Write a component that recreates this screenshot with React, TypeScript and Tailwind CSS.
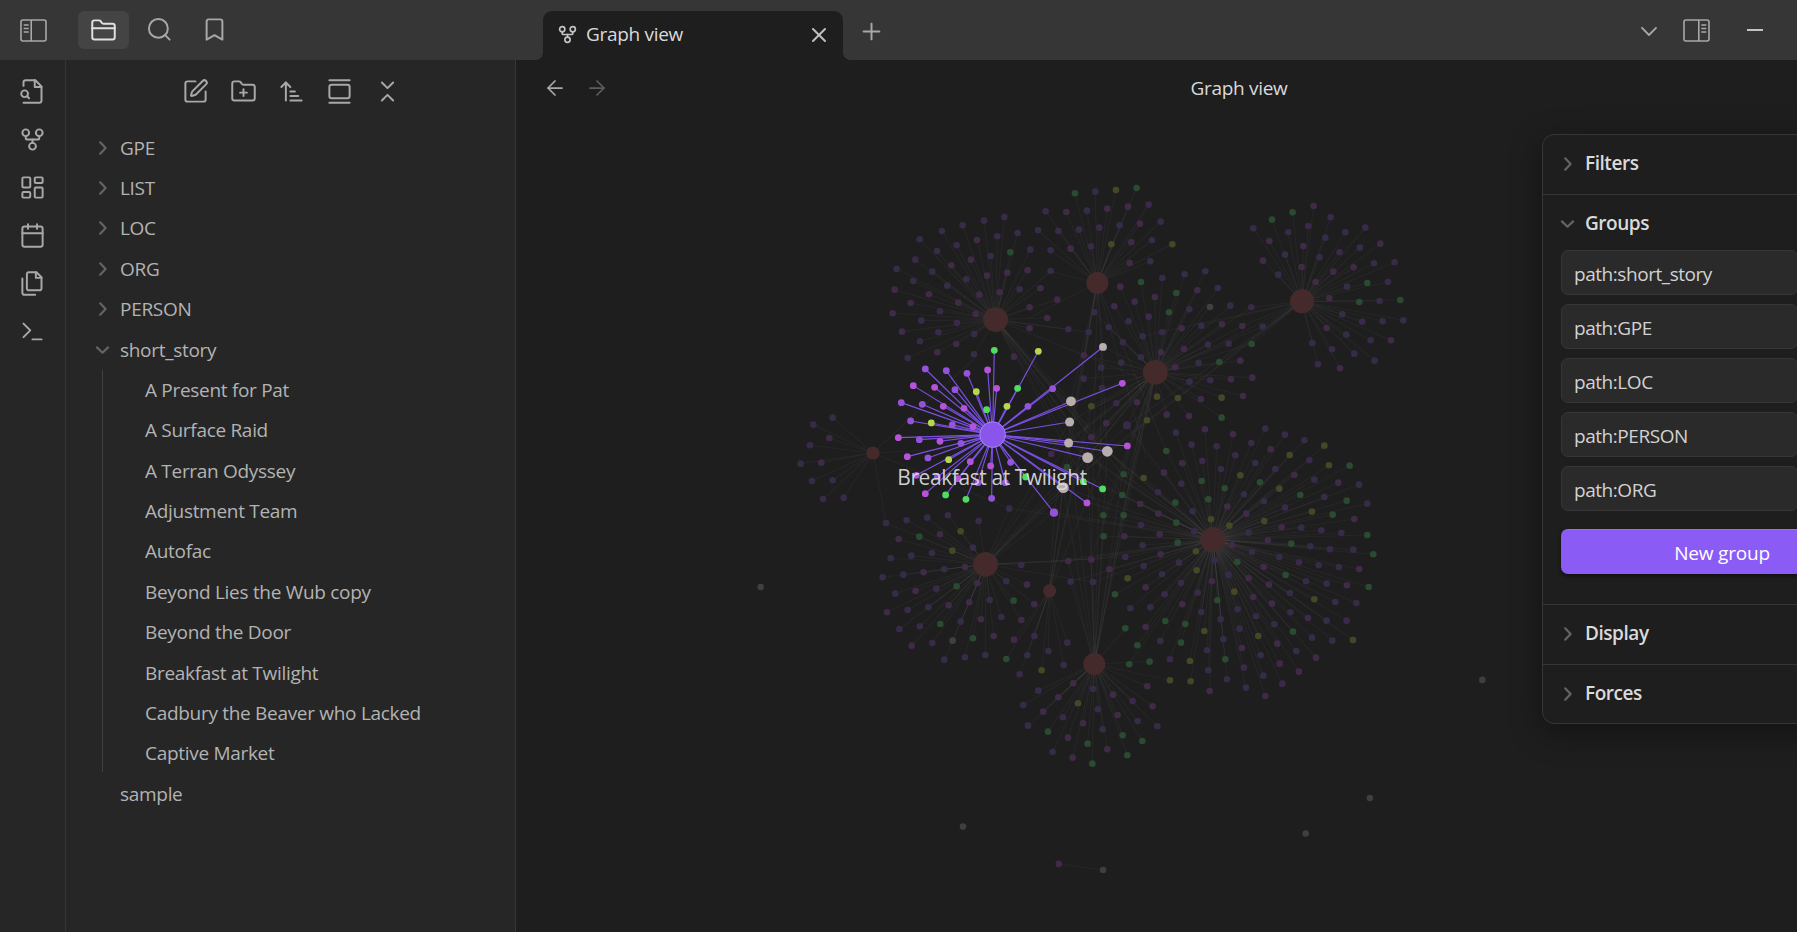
import type { ReactNode } from "react";
import {
  ArrowLeft,
  ArrowRight,
  ArrowUpNarrowWide,
  Bookmark,
  Calendar,
  ChevronsDownUp,
  FolderPlus,
  GalleryVertical,
  GitFork,
  LayoutDashboard,
  Plus,
  SquarePen,
  Terminal,
  X,
} from "lucide-react";

/* ---------- icons ---------- */

function Glyph({ paths, children }: { paths: string[]; children?: ReactNode }) {
  return (
    <svg width="27" height="27" viewBox="0 0 24 24" fill="none" stroke="currentColor" strokeWidth="1.75" strokeLinecap="round" strokeLinejoin="round">
      {paths.map((d) => (
        <path key={d} d={d} />
      ))}
      {children}
    </svg>
  );
}

const FileSearch = () => (
  <Glyph paths={["M4 22h14a2 2 0 0 0 2-2V7.5L14.5 2H6a2 2 0 0 0-2 2v3", "M14 2v6h6", "m9 18-1.8-1.8"]}>
    <circle cx="5" cy="14" r="3" />
  </Glyph>
);

const FilesIcon = () => (
  <Glyph
    paths={[
      "M15.5 2H8.6c-.4 0-.8.2-1.1.5-.3.3-.5.7-.5 1.1v12.8c0 .4.2.8.5 1.1.3.3.7.5 1.1.5h9.8c.4 0 .8-.2 1.1-.5.3-.3.5-.7.5-1.1V6.5L15.5 2z",
      "M3 7.6v12.8c0 .4.2.8.5 1.1.3.3.7.5 1.1.5h9.8",
      "M15 2v5h5",
    ]}
  />
);

const FolderClosed = () => (
  <Glyph
    paths={[
      "M20 20a2 2 0 0 0 2-2V8a2 2 0 0 0-2-2h-7.9a2 2 0 0 1-1.69-.9L9.6 3.9A2 2 0 0 0 7.93 3H4a2 2 0 0 0-2 2v13a2 2 0 0 0 2 2Z",
      "M2 10h20",
    ]}
  />
);

const SearchIcon = () => (
  <Glyph paths={["m21 21-4.2-4.2"]}>
    <circle cx="11" cy="11" r="8.4" />
  </Glyph>
);

function SidebarToggle({ flipped = false }: { flipped?: boolean }) {
  return (
    <svg width="27" height="23" viewBox="0 0 27 23" fill="none" stroke="currentColor" strokeWidth="1.6" className={flipped ? "-scale-x-100" : ""}>
      <rect x="1" y="1" width="25" height="21" rx="2" />
      <path d="M11.2 1v21M3.7 6h5M3.7 9.5h5M3.7 13h5" />
    </svg>
  );
}

function Caret({ open }: { open: boolean }) {
  return (
    <svg width="16" height="16" viewBox="0 0 16 16" fill="none" stroke="#646464" strokeWidth="2.2" strokeLinecap="round" strokeLinejoin="round" className="shrink-0">
      <path d={open ? "M1.9 5.4 7.5 10.7l5.6-5.3" : "M5.2 2.3 10.6 8l-5.4 5.7"} />
    </svg>
  );
}

/* ---------- graph data ---------- */

type Point = [number, number];
type Leaf = { kind: string; x: number; y: number };

/* Leaves are stored at three units per pixel, relative to the cluster's origin. */
function leaves([ox, oy]: Point, data: string): Leaf[] {
  return data
    .trim()
    .split(/\s+/)
    .map((item) => {
      const [x, y] = item.slice(1).split(",").map(Number);
      return { kind: item[0], x: ox + x / 3, y: oy + y / 3 };
    });
}

const A: Point = [860, 160];
const B: Point = [1120, 180];
const C: Point = [1020, 330];
const D: Point = [1060, 400];
const E: Point = [780, 400];
const F: Point = [980, 560];

const clusters: { hub: Point; r: number; items: Leaf[] }[] = [
  {
    hub: [995.3, 319.3],
    r: 12.4,
    items: leaves(A, "p432,170 p371,181 p307,195 p245,212 p178,237 p472,218 p411,228 m350,239 p289,255 p230,272 g450,276 p510,268 p165,298 m332,298 p391,287 m273,315 p109,326 p216,334 m441,337 m502,330 p571,332 m380,346 p318,357 p159,362 p261,376 m103,388 m206,402 p478,387 m540,384 m357,403 m418,396 m151,428 m294,427 m591,418 m508,441 p239,453 m97,459 m346,461 p183,481 m561,473 p290,488 m508,504 m125,514 p234,516 p342,521 p179,543 m288,551 m231,576 p341,582 p142,593 m461,589 p685,516 p624,507"),
  },
  {
    hub: [1097, 282.7],
    r: 11,
    items: leaves(A, "g644,99 p705,94 y767,89 g829,83 p556,153 m618,155 p680,151 m741,145 m803,139 p865,133 p533,210 p594,212 p656,208 p717,202 p778,195 m839,190 p901,184 p571,270 m631,265 p692,258 y753,252 m813,246 p875,240 y936,252 m808,308 p870,303"),
  },
  {
    hub: [1155, 372],
    r: 12.4,
    items: [
      ...leaves(A, "m780,379 g842,365 p906,353 p973,342 g948,398 m1011,390 m884,410 m823,424 m762,438 p702,456 g926,456 p987,447 m865,469 p805,483 p745,501 m964,504 p906,516 p847,528 p788,546 m671,585 p842,591 m902,576 m971,566 p783,607 p723,622 m945,621 p670,655 p725,683 p988,664 y890,709 y953,713 m830,726 p768,729 y693,738"),
      ...leaves(B, "p255,273 p293,323 w269,380 p330,376 p393,381 p243,436 m305,432 m366,437 p427,439 p263,493 p325,490 g394,491 p235,548 g297,545 m360,541 p270,600 m332,597 m396,592 m242,656 y304,652 m368,647 m139,703 m206,707 g304,712"),
      ...leaves(C, "y380,270 m258,279 P320,285 m213,321 m93,371 g140,410"),
    ],
  },
  {
    hub: [1301.7, 301],
    r: 12,
    items: leaves(B, "p399,144 g455,118 g517,96 m580,77 p631,111 p564,137 p504,156 m447,182 p675,156 p735,142 p615,172 m549,197 p494,223 m428,241 p658,216 p719,202 m780,190 p598,231 m544,260 p474,283 m639,274 m700,261 p761,249 p823,246 m586,305 p680,319 g741,308 p803,305 m627,353 g717,365 p778,362 g840,359 p666,402 p726,424 p787,423 p849,420 m619,443 p678,463 p751,480 m812,480 p576,488 p635,507 p702,520 p763,541 p593,552 m659,564"),
  },
  {
    hub: [1212.7, 539.3],
    r: 12.6,
    items: leaves(D, "p347,97 m434,87 m518,102 p615,85 p674,103 p732,120 y792,136 p573,128 p469,138 p394,133 m631,147 g318,152 p525,165 y688,164 p747,180 m366,189 p426,182 p585,188 y806,195 g868,196 p482,206 p645,206 m311,217 g190,222 y540,225 m702,224 y250,233 g424,242 g599,246 p762,238 m834,247 p896,253 p363,250 g493,264 y657,265 p293,276 g186,284 p551,282 g720,284 p792,290 g444,297 p611,303 g345,307 g859,301 m240,311 p921,310 m501,319 p674,322 p397,333 m294,340 y755,334 m558,340 g817,343 g129,345 g190,345 m882,356 y452,357 y612,362 g348,367 p242,374 y507,376 m664,381 p723,382 p783,390 p402,393 p565,397 p843,398 m298,402 g921,404 m192,408 g130,408 m623,420 g352,427 g693,430 p247,435 m515,434 p750,438 p809,447 p879,448 y407,453 p575,455 m301,462 g939,462 p195,470 p657,470 m93,478 m24,482 p463,480 g531,485 p716,486 p356,487 p775,495 p250,497 m610,500 p836,500 m897,506 m147,507 y409,510 p305,522 p505,523 g676,524 y202,534 m565,534 p31,544 p98,545 m455,543 p737,543 p362,548 p799,550 m626,553 m860,555 g925,560 m256,561 y522,574 p412,577 p689,578 g164,582 p313,582 m579,590 y762,597 g471,600 p825,605 p888,608 m635,610 m366,612 p270,621 p210,624 p532,627 p423,635 p690,636 p587,648 m743,653 p481,657 g315,662 p799,661 p859,661 g375,671 p642,672 m256,680 p538,685 y432,692 g698,694 y594,707 p755,712 p489,717 p816,721 y878,719 p300,722 g362,727 m651,730 g231,735 m545,743 p440,750 p708,752 p601,765 m767,772 g495,777 p329,777 y389,782 g207,792 m658,790 p551,802 p444,810 m716,814 p609,826 p500,837 y391,843 p666,850 p557,862 m448,872 m615,887"),
  },
  {
    hub: [1094, 663.7],
    r: 11,
    items: [
      ...leaves(F, "m279,369 p338,386 m398,403 m501,378 p174,391 m234,411 p129,434 y293,429 p457,422 m517,438 p353,447 m189,454 m412,464 p248,471 p472,482 m308,489 p143,496 p367,507 p531,498 g203,514 g427,525 m263,532 g486,542 g322,550 m381,567 p217,575 g441,585 m277,592 g336,610"),
      ...leaves(D, "g268,784 y329,840 g195,684"),
    ],
  },
  {
    hub: [985.3, 564],
    r: 12.4,
    items: leaves(E, "p317,368 p379,360 p441,352 p503,345 p595,362 p687,325 m355,416 g417,409 m479,402 y541,393 p578,442 y516,451 p455,458 p393,466 p331,474 m554,500 p492,507 m430,516 p369,523 p307,531 g529,558 p468,565 m406,572 p345,580 m591,549 p678,543 p723,494 m740,553 g700,601 m762,612 p628,599 m567,606 m505,615 p444,621 p382,629 m320,636 m602,657 p663,650 m723,659 p541,664 g480,671 p419,678 p357,686 m640,707 g578,714 w517,721 p456,728 m394,736 p615,764 p554,771 p492,778"),
  },
  {
    hub: [1049.3, 590.5],
    r: 6.6,
    items: leaves(F, "m101,238 p162,227 p204,272 p261,247 p141,285 p250,314 g78,296 y184,330 p118,342"),
  },
  {
    hub: [872.7, 452.7],
    r: 6.6,
    items: leaves(E, "p157,52 p99,73 m147,113 p89,135 p61,190 m123,187 p95,242 p157,240 p128,296 p190,292"),
  },
];

const focus: Point = [992.3, 434.3];
const focusItems = leaves(
  [870, 330],
  "g372,60 y504,63 v698,50 p165,116 p228,121 p290,129 m352,119 m129,166 m193,171 p254,178 y318,184 m379,174 g442,174 p547,175 m756,159 W602,213 p93,217 p156,222 m219,228 m281,234 g349,238 y410,228 p473,228 w598,275 p121,272 y183,278 p246,283 m308,289 m84,322 p147,328 m209,333 p272,339 w595,338 X711,363 m771,347 X652,382 m111,379 p173,383 y235,388 m300,394 p421,396 m361,407 m138,435 p201,440 m263,445 p323,457 p405,457 g466,440 g639,454 X579,472 g697,476 m165,490 g226,494 g287,507 p364,504 m650,518 P551,547",
);

/* Links between clusters: from a hub to shared nodes elsewhere. */
const sharedLinks: [Point, Point[]][] = [
  [[995.3, 319.3], [[1070.7, 401], [1069.3, 421.7], [1068.3, 442.7], [1087.3, 457.3], [1107, 451], [1122, 474], [1122, 495], [1091, 437], [1133, 478], [1103, 515], [1141, 378]]],
  [[1097, 282.7], [[1063, 487.3], [1053.7, 512.3], [1068.3, 442.7], [1070.7, 401], [1102.7, 346.7], [1107, 451], [1084, 356], [1050, 271], [1028, 318], [1146, 457], [1166, 451], [1091, 559]]],
  [[1155, 372], [[1102.7, 346.7], [1070.7, 401], [1069.3, 421.7], [1068.3, 442.7], [1087.3, 457.3], [1063, 487.3], [1122, 474], [1122, 495], [1103, 515], [1123, 515], [1091, 559], [1109, 569]]],
  [[1301.7, 301], [[1251, 307], [1262, 326], [1142, 336], [1201, 325], [1251, 344], [1219, 362], [1107, 451], [1127, 425], [1091, 409], [1063, 487.3], [1241, 326]]],
  [[1212.7, 539.3], [[1107, 451], [1087.3, 457.3], [1068.3, 442.7], [1063, 487.3], [1053.7, 512.3], [1009, 508], [1069, 559], [1127, 425], [1091, 437], [1067, 467], [1102, 486], [1087, 502]]],
  [[1094, 663.7], [[1102.7, 346.7], [1063, 487.3], [1068.3, 442.7], [1107, 451], [1087.3, 457.3], [1068, 561], [1070, 581], [1093, 582], [1109, 569], [1122, 474], [1123, 515], [1103, 536], [1141, 420], [1091, 559], [1155, 372]]],
  [[985.3, 564], [[1053.7, 512.3], [1063, 487.3], [1068.3, 442.7], [1087.3, 457.3], [1107, 451], [1069.3, 421.7], [1127, 425], [1068, 561], [1091, 559], [1093, 582], [1125, 557], [1155, 372]]],
  [[1049.3, 590.5], [[1053.7, 512.3], [1063, 487.3], [1068.3, 442.7], [1107, 451], [1091, 409], [1102.7, 346.7]]],
  [[872.7, 452.7], [[885.7, 522.7], [1009, 508], [1068.3, 442.7], [974, 358]]],
];

const dimFill: Record<string, string> = { p: "#372b48", P: "#372b48", m: "#412a47", g: "#2a4a31", y: "#464727", w: "#404040" };
const brightFill: Record<string, string> = { p: "#9553dc", P: "#9553dc", m: "#b753da", g: "#50dc61", y: "#b5d84e", v: "#b8aeae", w: "#b8aeae", W: "#b8aeae", X: "#b8aeae" };
const radius: Record<string, number> = { P: 4.1, v: 3.9, w: 4.5, W: 4.9, X: 5.4 };

const strayNodes: Point[] = [[760.4, 586.8], [1482, 679.6], [1369.6, 797.7], [1305.4, 833.2], [962.7, 826.3], [1102.8, 869.7]];

function Graph() {
  return (
    <svg className="absolute left-0 top-0" width="1281" height="872" viewBox="515.7 59.7 1281 872">
      <g stroke="#ffffff" strokeOpacity="0.034" strokeWidth="1.1">
        {clusters.map(({ hub, items }) =>
          items.map((n) => <line key={`${n.x}-${n.y}`} x1={hub[0]} y1={hub[1]} x2={n.x} y2={n.y} />),
        )}
        {sharedLinks.map(([hub, ends]) =>
          ends.map(([x, y]) => <line key={`${hub[0]}-${x}-${y}`} x1={hub[0]} y1={hub[1]} x2={x} y2={y} />),
        )}
        <line x1="1058.5" y1="863.6" x2="1102.8" y2="869.7" />
      </g>
      {clusters.map(({ hub, r, items }) => (
        <g key={hub[0]}>
          {items.map((n) => (
            <circle key={`${n.x}-${n.y}`} cx={n.x} cy={n.y} r={n.kind === "P" ? 4.1 : 3.3} fill={dimFill[n.kind]} />
          ))}
          <circle cx={hub[0]} cy={hub[1]} r={r} fill="#452a2b" />
        </g>
      ))}
      {strayNodes.map(([x, y]) => (
        <circle key={x} cx={x} cy={y} r="3.3" fill="#3f3f3f" />
      ))}
      <circle cx="1058.5" cy="863.6" r="3.3" fill="#412a47" />
      <g stroke="#7c50e4" strokeWidth="1.15">
        {focusItems.map((n) => (
          <line key={`${n.x}-${n.y}`} x1={focus[0]} y1={focus[1]} x2={n.x} y2={n.y} />
        ))}
      </g>
      {focusItems.map((n) => (
        <circle key={`${n.x}-${n.y}`} cx={n.x} cy={n.y} r={radius[n.kind] ?? 3.4} fill={brightFill[n.kind]} />
      ))}
      <circle cx={focus[0]} cy={focus[1]} r="12.8" fill="#8a55ea" stroke="#a587f2" strokeWidth="1" />
      <text x="992" y="484.8" textAnchor="middle" textLength="190" fontSize="21" fill="#dadada" fillOpacity="0.95">
        Breakfast at Twilight
      </text>
    </svg>
  );
}

/* ---------- panels ---------- */

function TreeRow({ label, open }: { label: string; open?: boolean }) {
  return (
    <div className="flex h-[40.4px] items-center pl-[29px]">
      <span className="flex w-[25px] shrink-0">{open !== undefined && <Caret open={open} />}</span>
      <span className="pt-px">{label}</span>
    </div>
  );
}

const folders = ["GPE", "LIST", "LOC", "ORG", "PERSON"];
const stories = [
  "A Present for Pat",
  "A Surface Raid",
  "A Terran Odyssey",
  "Adjustment Team",
  "Autofac",
  "Beyond Lies the Wub copy",
  "Beyond the Door",
  "Breakfast at Twilight",
  "Cadbury the Beaver who Lacked",
  "Captive Market",
];
const groups = ["path:short_story", "path:GPE", "path:LOC", "path:PERSON", "path:ORG"];

function SectionTitle({ label, open = false }: { label: string; open?: boolean }) {
  return (
    <div className="flex h-[59px] items-center pb-[2px] pl-[17px] font-semibold tracking-[-0.45px] text-[#dadada]">
      <Caret open={open} />
      <span className="ml-[9px]">{label}</span>
    </div>
  );
}

function Controls() {
  return (
    <div className="absolute left-[1026px] top-[74px] w-[360px] rounded-[12px] border border-[#363636] bg-[#1e1e1e] shadow-[0_8px_32px_rgba(0,0,0,0.4)]">
      <SectionTitle label="Filters" />
      <div className="h-[410px] border-t border-[#363636]">
        <SectionTitle label="Groups" open />
        <div className="-mt-[4px] flex flex-col gap-[9px] pl-[18px]">
          {groups.map((g) => (
            <div key={g} className="flex h-[45px] w-[237px] items-center rounded-[7px] border border-[#363636] bg-[#2a2a2a] pl-[12px] pt-[3px] tracking-[-0.45px] text-[#d2d2d2]">
              {g}
            </div>
          ))}
        </div>
        <div className="ml-[18px] mt-[18px] flex h-[45px] w-[322px] items-center justify-center rounded-[7px] bg-[#8a5cf5] pt-[3px] tracking-[-0.2px] text-white shadow-[0_2px_4px_rgba(0,0,0,0.5),inset_0_1px_0_rgba(255,255,255,0.12)]">
          New group
        </div>
      </div>
      <div className="border-t border-[#363636]">
        <SectionTitle label="Display" />
      </div>
      <div className="h-[59px] border-t border-[#363636]">
        <SectionTitle label="Forces" />
      </div>
    </div>
  );
}

function TitleBar() {
  return (
    <header className="flex h-[60px] shrink-0 bg-[#363636] text-[#a8a8a8]">
      <div className="flex w-[543px] shrink-0 pl-[20px]">
        <div className="mt-[19px]">
          <SidebarToggle />
        </div>
        <div className="ml-[31px] mt-[11px] flex h-[38px] w-[51px] items-center justify-center rounded-[6px] bg-[#444444] text-[#e0e0e0]">
          <FolderClosed />
        </div>
        <div className="ml-[17px] mt-[16px]">
          <SearchIcon />
        </div>
        <div className="ml-[28px] mt-[16px]">
          <Bookmark size={27} strokeWidth={1.75} />
        </div>
      </div>
      <div className="relative mt-[11px] flex h-[49px] w-[300px] shrink-0 items-center rounded-t-[9px] bg-[#1e1e1e] pl-[14px] pr-[12px]">
        <div className="absolute -left-[7px] bottom-0 size-[7px] bg-[radial-gradient(circle_at_0_0,transparent_6.5px,#1e1e1e_7px)]" />
        <div className="absolute -right-[7px] bottom-0 size-[7px] bg-[radial-gradient(circle_at_100%_0,transparent_6.5px,#1e1e1e_7px)]" />
        <GitFork size={21} strokeWidth={1.9} className="-mt-[2px] text-[#c4c4c4]" />
        <span className="-mt-[2px] ml-[8px] flex-1 tracking-[-0.3px] text-[#dadada]">Graph view</span>
        <X size={24} strokeWidth={2} className="-mt-[2px] text-[#c0c0c0]" />
      </div>
      <div className="ml-[15px] mt-[18px]">
        <Plus size={27} strokeWidth={1.75} />
      </div>
      <div className="ml-auto flex shrink-0 pr-[34px]">
        <svg className="mt-[26px]" width="16" height="11" viewBox="0 0 16 11" fill="none" stroke="currentColor" strokeWidth="1.8" strokeLinecap="round" strokeLinejoin="round">
          <path d="M1 1.8 8 9l7-7.2" />
        </svg>
        <div className="ml-[26px] mt-[19px]">
          <SidebarToggle flipped />
        </div>
        <div className="ml-[37px] mt-[29px] h-[2px] w-[16px] bg-[#c4c4c4]" />
      </div>
    </header>
  );
}

export default function App() {
  return (
    <div className="flex h-[932px] w-[1797px] flex-col overflow-hidden bg-[#1e1e1e] font-['Open_Sans','Noto_Sans',sans-serif] text-[19px] leading-none text-[#b3b3b3]">
      <TitleBar />
      <div className="flex min-h-0 flex-1">
        <nav className="flex w-[66px] shrink-0 flex-col items-center gap-[21px] border-r border-[#363636] bg-[#262626] pt-[18px] text-[#a8a8a8]">
          <FileSearch />
          <GitFork size={27} strokeWidth={1.75} />
          <LayoutDashboard size={27} strokeWidth={1.75} />
          <Calendar size={27} strokeWidth={1.75} />
          <FilesIcon />
          <Terminal size={27} strokeWidth={1.75} />
        </nav>
        <aside className="w-[450px] shrink-0 border-r border-[#363636] bg-[#262626] tracking-[-0.3px]">
          <div className="flex gap-[21px] pl-[116px] pt-[18px] text-[#a8a8a8]">
            <SquarePen size={27} strokeWidth={1.75} />
            <FolderPlus size={27} strokeWidth={1.75} />
            <ArrowUpNarrowWide size={27} strokeWidth={1.75} />
            <GalleryVertical size={27} strokeWidth={1.75} />
            <ChevronsDownUp size={27} strokeWidth={1.75} />
          </div>
          <div className="mt-[22.5px]">
            {folders.map((f) => (
              <TreeRow key={f} label={f} open={false} />
            ))}
            <TreeRow label="short_story" open />
            <div className="mb-[2px] ml-[36px] h-[402px] border-l border-[#404040]">
              {stories.map((s) => (
                <div key={s} className="flex h-[40.4px] items-center pl-[42px] pt-[0.5px]">
                  {s}
                </div>
              ))}
            </div>
            <TreeRow label="sample" />
          </div>
        </aside>
        <main className="relative min-w-0 flex-1 overflow-hidden">
          <Graph />
          <div className="relative flex h-[56px] w-[1446px] items-center justify-center text-[#dadada]">
            <div className="absolute left-[27px] top-[16px] flex gap-[18px]">
              <ArrowLeft size={24} strokeWidth={1.75} className="text-[#a8a8a8]" />
              <ArrowRight size={24} strokeWidth={1.75} className="text-[#5c5c5c]" />
            </div>
            <span className="tracking-[-0.3px]">Graph view</span>
          </div>
          <Controls />
        </main>
      </div>
    </div>
  );
}
